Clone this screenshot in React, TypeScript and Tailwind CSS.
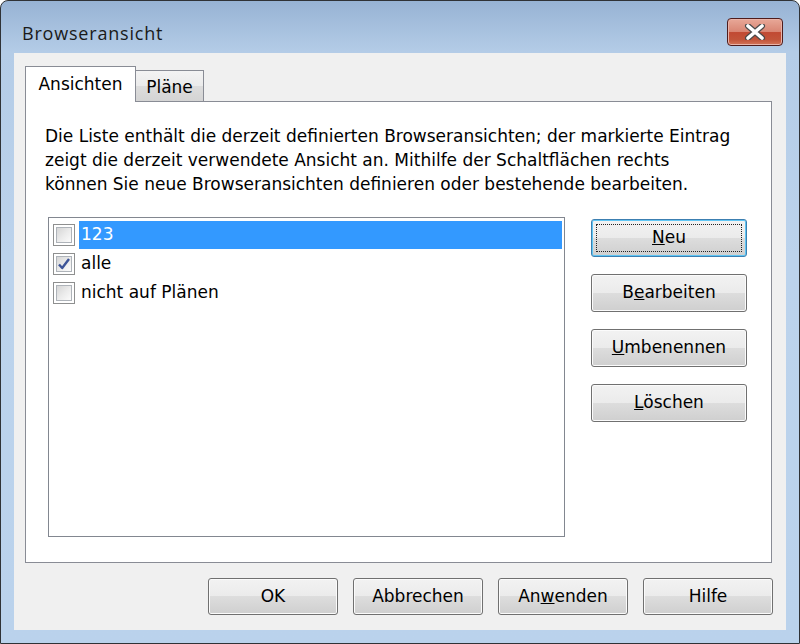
import React from "react";

const items = [
    { label: "123", checked: false, selected: true },
    { label: "alle", checked: true, selected: false },
    { label: "nicht auf Plänen", checked: false, selected: false },
];

function CheckBox({ checked }: { checked: boolean }) {
    return (
        <div className="w-[22px] h-[22px] shrink-0 border border-[#8e8f8f] bg-white p-[2px]">
            <div className="w-full h-full border border-[#aeb3b9] bg-[linear-gradient(135deg,#d6d6d6_0%,#ececec_55%,#fbfbfb_100%)] flex items-center justify-center">
                {checked && (
                    <svg width="14" height="14" viewBox="0 0 14 14">
                        <path d="M2 7.5 L5.2 11 L12 2" fill="none" stroke="#3d5497" strokeWidth="2.4" strokeLinejoin="round" />
                    </svg>
                )}
            </div>
        </div>
    );
}

function Button({ children, className = "", primary = false }: { children: React.ReactNode; className?: string; primary?: boolean }) {
    return (
        <div
            className={
                "relative flex items-center justify-center rounded-[3px] border text-[17px] text-[#000] " +
                (primary
                    ? "border-[#3c7fb1] shadow-[inset_0_0_0_1px_#5ec6f4] bg-[linear-gradient(#f2f2f2_0%,#ebebeb_50%,#dddddd_50%,#cfcfcf_100%)] "
                    : "border-[#707070] shadow-[inset_0_0_0_1px_#fbfbfb] bg-[linear-gradient(#f2f2f2_0%,#ebebeb_50%,#dddddd_50%,#cfcfcf_100%)] ") +
                className
            }
        >
            {primary && <span className="absolute inset-[4px] border border-dotted border-[#222]" />}
            <span className="relative">{children}</span>
        </div>
    );
}

export default function App() {
    return (
        <div className="w-[800px] h-[644px] bg-white font-['DejaVu_Sans','Liberation_Sans',sans-serif]">
            <div className="w-full h-full flex flex-col rounded-t-[8px] border border-[#2f3236] bg-[linear-gradient(180deg,#97b3d4_0%,#b4cce7_8%,#bcd3ec_40%,#bad2ec_100%)]">
                {/* title bar */}
                <div className="h-[52px] flex items-start justify-between pl-[21px] pr-[16px]">
                    <span className="mt-[21px] text-[18px] leading-[22px] tracking-[0.8px] text-[#1a1a1a] font-['Open_Sans',sans-serif]">Browseransicht</span>
                    <div className="mt-[17px] w-[56px] h-[28px] rounded-[4px] border border-[#4f1c1c] shadow-[inset_0_0_0_1px_#e9b3a8] bg-[linear-gradient(#e8a898_0%,#d98674_48%,#c14a33_52%,#c2543a_80%,#d37559_100%)] flex items-center justify-center">
                        <svg width="24" height="16" viewBox="0 0 24 16">
                            <path d="M5 2 L19 14 M19 2 L5 14" stroke="#4a4a4a" strokeWidth="6" strokeLinecap="round" />
                            <path d="M5 2 L19 14 M19 2 L5 14" stroke="#ffffff" strokeWidth="3.6" strokeLinecap="round" />
                        </svg>
                    </div>
                </div>

                {/* client area */}
                <div className="flex-1 mx-[13px] mb-[13px] bg-[#f0f0f0] flex flex-col pt-[13px] pl-[11px] pr-[14px] pb-[15px]">
                    <div className="h-[36px] flex items-end -mb-px relative z-10">
                        <div className="h-[36px] w-[111px] border border-b-0 border-[#898c95] bg-white flex justify-center pt-[5px] text-[17px] leading-[24px] text-black">
                            Ansichten
                        </div>
                        <div className="h-[32px] w-[68px] border border-l-0 border-[#898c95] bg-[linear-gradient(#f3f3f3_0%,#ebebeb_50%,#dddddd_50%,#d4d4d4_100%)] flex justify-center pt-[4px] text-[17px] leading-[24px] text-black">
                            Pläne
                        </div>
                    </div>

                    <div className="flex-1 border border-[#898c95] bg-white flex flex-col">
                        <p className="pt-[22px] px-[19px] text-[17px] leading-[24px] text-black whitespace-nowrap">
                            Die Liste enthält die derzeit definierten Browseransichten; der markierte Eintrag
                            <br />
                            zeigt die derzeit verwendete Ansicht an. Mithilfe der Schaltflächen rechts
                            <br />
                            können Sie neue Browseransichten definieren oder bestehende bearbeiten.
                        </p>

                        <div className="flex-1 flex gap-[26px] mt-[21px] ml-[22px] mr-[24px] mb-[25px]">
                            <div className="flex-1 border border-[#828790] bg-white pt-[2px] pl-[4px] pr-[2px]">
                                {items.map((item) => (
                                    <div key={item.label} className="h-[29px] flex items-center gap-[4px]">
                                        <CheckBox checked={item.checked} />
                                        <div
                                            className={
                                                "flex-1 h-[28px] flex items-center pl-[2px] text-[17px] " +
                                                (item.selected ? "bg-[#3399ff] text-white" : "text-black")
                                            }
                                        >
                                            {item.label}
                                        </div>
                                    </div>
                                ))}
                            </div>

                            <div className="w-[156px] flex flex-col gap-[17px] pt-[2px]">
                                <Button primary className="h-[38px]">
                                    <u>N</u>eu
                                </Button>
                                <Button className="h-[38px]">
                                    B<u>e</u>arbeiten
                                </Button>
                                <Button className="h-[38px]">
                                    <u>U</u>mbenennen
                                </Button>
                                <Button className="h-[38px]">
                                    <u>L</u>öschen
                                </Button>
                            </div>
                        </div>
                    </div>

                    <div className="flex justify-end gap-[15px] mt-[15px] -mr-px">
                        <Button className="w-[130px] h-[37px]">OK</Button>
                        <Button className="w-[130px] h-[37px]">Abbrechen</Button>
                        <Button className="w-[130px] h-[37px]">
                            An<u>w</u>enden
                        </Button>
                        <Button className="w-[130px] h-[37px]">Hilfe</Button>
                    </div>
                </div>
            </div>
        </div>
    );
}
